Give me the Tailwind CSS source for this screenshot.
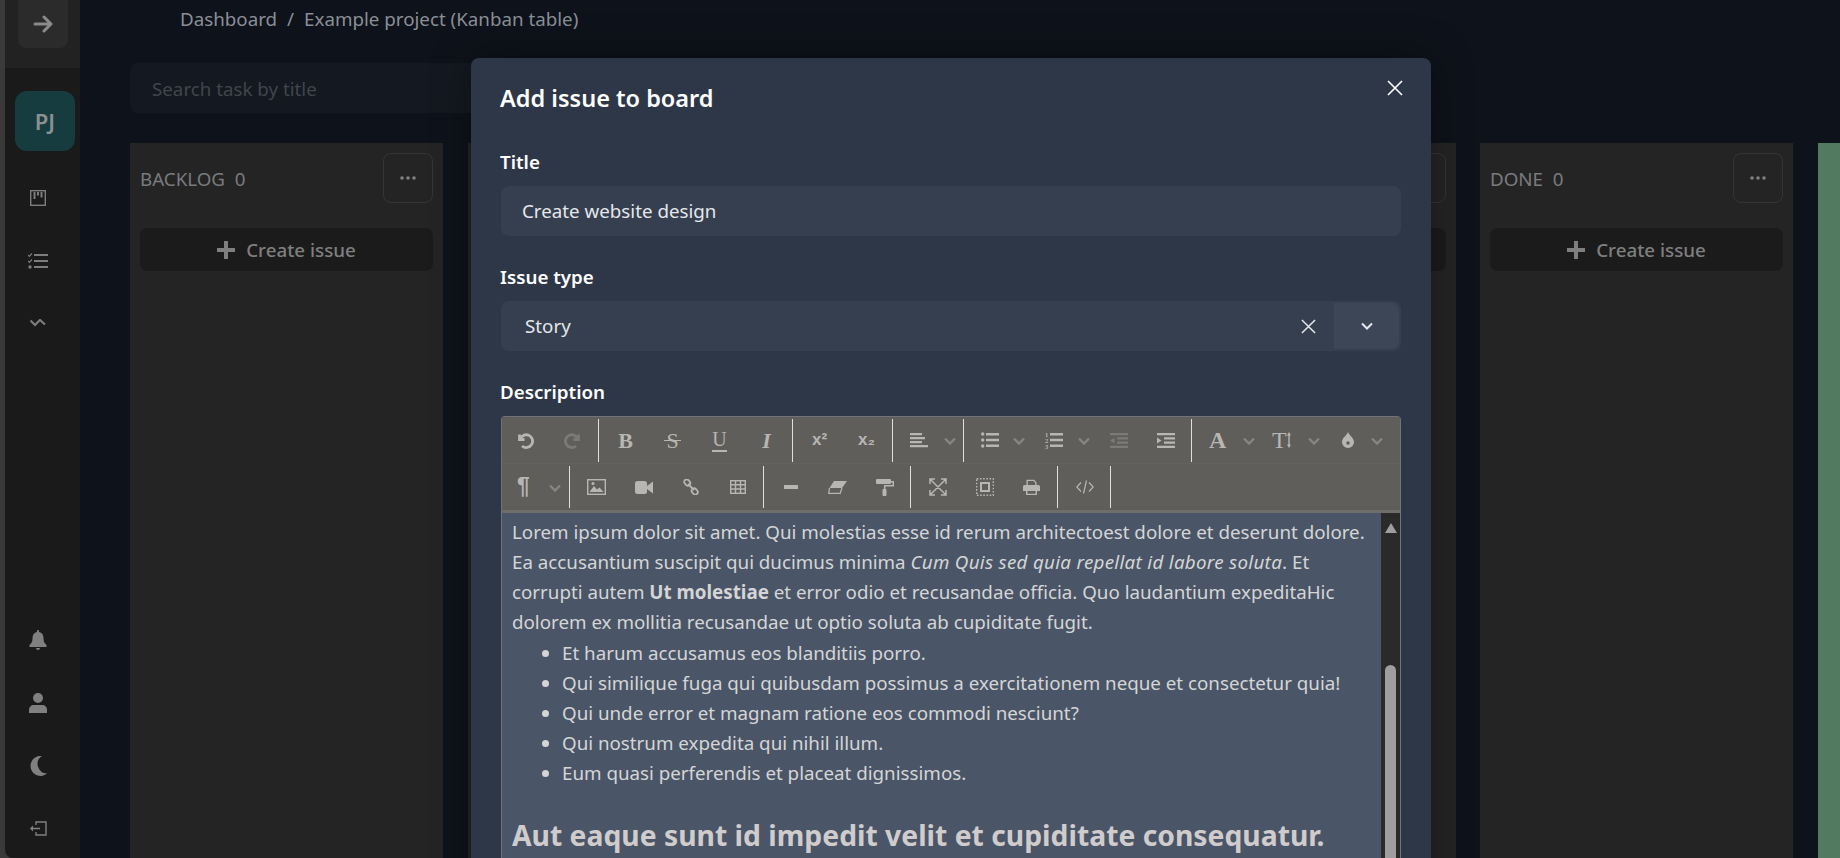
<!DOCTYPE html>
<html>
<head>
    <title>Kanban table</title>
    <script src="https://cdn.jsdelivr.net/npm/@tailwindcss/browser@4"></script>
</head>
<body class="bg-[#0e121a] font-['Noto_Sans',sans-serif] overflow-hidden">
    <div class="relative flex w-[1840px] h-[858px] overflow-hidden">
        <!-- sidebar -->
        <aside class="w-[80px] h-full shrink-0 pl-[5px] bg-[#3a3a3a]">
            <div class="h-full flex flex-col rounded-bl-lg bg-[#1a1a1a]">
                <div class="h-[68px] shrink-0 bg-[#222222] pl-[13px]">
                    <div class="w-[50px] h-[48px] rounded-b-lg bg-[#2b2b2b] flex items-center justify-center text-[#8a8a8a]">
                        <svg class="w-[20px] h-[18px]" viewBox="0 0 20 18" fill="none" stroke="currentColor" stroke-width="3" stroke-linecap="round" stroke-linejoin="round"><path d="M2 9h15M11 2l7 7-7 7"/></svg>
                    </div>
                </div>
                <div class="w-[60px] h-[60px] mt-[23px] ml-[10px] rounded-xl bg-[#163c40] flex items-center justify-center text-[#8b9090] text-[22px] font-semibold">PJ</div>
                <div class="flex flex-col items-center w-[66px] mt-[39px] gap-[47px] text-[#7d7d7d]">
                    <svg class="w-[16px] h-[16px]" viewBox="0 0 16 16" fill="none" stroke="currentColor" stroke-width="1.400"><rect x="0.700" y="0.700" width="14.600" height="14.600"/><path d="M4.500 2v7M8 2v3.500M11.500 2v5.500" stroke-width="2"/></svg>
                    <svg class="w-[20px] h-[16px]" viewBox="0 0 20 16" fill="currentColor"><path d="M6 1h14v2H6zM6 7h14v2H6zM6 13h14v2H6z"/><path d="M0 2l1.300 1.300L4 .5M0 8l1.300 1.300L4 6.500" fill="none" stroke="currentColor" stroke-width="1.200"/><circle cx="2" cy="14" r="1.700"/></svg>
                    <svg class="w-[16px] h-[8px] mt-[3px]" viewBox="0 0 16 8" fill="none" stroke="currentColor" stroke-width="2.200"><path d="M0.500 1.500L5 6l5-5 5 4.500"/></svg>
                </div>
                <div class="flex flex-col items-center w-[66px] mt-auto mb-[22px] gap-[43px] text-[#808080]">
                    <svg class="w-[18px] h-[20px]" viewBox="0 0 18 20" fill="currentColor"><path d="M9 0c.6 0 1 .4 1 1v1c3 .6 4.500 3 4.500 6 0 4 1 5 3 7v2H.5v-2c2-2 3-3 3-7 0-3 1.500-5.400 4.500-6V1c0-.6.4-1 1-1zM7 18h4c0 1-1 2-2 2s-2-1-2-2z"/></svg>
                    <svg class="w-[18px] h-[20px]" viewBox="0 0 18 20" fill="currentColor"><circle cx="9" cy="5" r="5"/><path d="M0 20v-3c0-3 2-5 5-5h8c3 0 5 2 5 5v3z"/></svg>
                    <svg class="w-[18px] h-[20px]" viewBox="0 0 18 20" fill="currentColor"><path d="M13 0A10 10 0 1 0 18 17.500A9.500 9.500 0 0 1 13 0z"/></svg>
                    <svg class="w-[17px] h-[15px] mt-[2px]" viewBox="0 0 17 15" fill="none" stroke="currentColor" stroke-width="1.400"><path d="M6 4V1h10v13H6v-3M1 7.500h9"/><path d="M0 7.500l3-3v6z" fill="currentColor" stroke="none"/></svg>
                </div>
            </div>
        </aside>
        <!-- main -->
        <main class="flex-1 flex flex-col min-w-0">
            <nav class="flex items-center h-[38px] pl-[100px] gap-[10px] text-[#8a8f96] text-[18.750px]">
                <span>Dashboard</span><span>/</span><span>Example project (Kanban table)</span>
            </nav>
            <div class="mt-[25px] ml-[50px] w-[400px] h-[50px] rounded-lg bg-[#141820] flex items-center pl-[22px] pt-[2px] text-[18.750px] text-[#41454c]">Search task by title</div>
            <div class="flex gap-[24.500px] mt-[30px] ml-[50px] flex-1">
                <section class="w-[313px] shrink-0 bg-[#242424] px-[10px]">
                    <div class="flex items-center justify-between h-[50px] mt-[10px]">
                        <span class="pt-[2px] text-[18.750px] text-[#797b7e] whitespace-pre">BACKLOG  0</span>
                        <button class="w-[50px] h-[50px] rounded-lg border border-[#353535] text-[#808080] flex items-center justify-center"><svg class="w-[16px] h-[4px]" viewBox="0 0 16 4" fill="currentColor"><circle cx="2" cy="2" r="1.800"/><circle cx="8" cy="2" r="1.800"/><circle cx="14" cy="2" r="1.800"/></svg></button>
                    </div>
                    <button class="flex items-center justify-center gap-[11px] w-full h-[43px] mt-[25px] pt-[2px] rounded-lg bg-[#1b1b1b] text-[#7f7f7f] text-[18.750px] font-medium"><svg class="w-[18px] h-[18px] mb-[2px]" viewBox="0 0 18 18" fill="currentColor"><path d="M7 0h4v7h7v4h-7v7H7v-7H0V7h7z"/></svg>Create issue</button>
                </section>
                <section class="w-[313px] shrink-0 bg-[#242424]"></section>
                <section class="w-[313px] shrink-0 bg-[#242424]"></section>
                <section class="w-[313px] shrink-0 bg-[#242424] px-[10px]">
                    <div class="flex items-center justify-end h-[50px] mt-[10px]">
                        <button class="w-[50px] h-[50px] rounded-lg border border-[#353535]"></button>
                    </div>
                    <div class="w-full h-[43px] mt-[25px] rounded-lg bg-[#1b1b1b]"></div>
                </section>
                <section class="w-[313px] shrink-0 bg-[#242424] px-[10px]">
                    <div class="flex items-center justify-between h-[50px] mt-[10px]">
                        <span class="pt-[2px] text-[18.750px] text-[#797b7e] whitespace-pre">DONE  0</span>
                        <button class="w-[50px] h-[50px] rounded-lg border border-[#353535] text-[#808080] flex items-center justify-center"><svg class="w-[16px] h-[4px]" viewBox="0 0 16 4" fill="currentColor"><circle cx="2" cy="2" r="1.800"/><circle cx="8" cy="2" r="1.800"/><circle cx="14" cy="2" r="1.800"/></svg></button>
                    </div>
                    <button class="flex items-center justify-center gap-[11px] w-full h-[43px] mt-[25px] pt-[2px] rounded-lg bg-[#1b1b1b] text-[#7f7f7f] text-[18.750px] font-medium"><svg class="w-[18px] h-[18px] mb-[2px]" viewBox="0 0 18 18" fill="currentColor"><path d="M7 0h4v7h7v4h-7v7H7v-7H0V7h7z"/></svg>Create issue</button>
                </section>
                <section class="w-[40px] shrink-0 bg-[#527a60]"></section>
            </div>
        </main>
        <!-- modal -->
        <div class="absolute left-[471px] top-[58px] w-[960px] h-[860px] rounded-lg bg-[#2d3748] px-[30px] text-white shadow-[0_0_40px_rgba(0,0,0,0.35)]">
            <h2 class="-ml-[1px] text-[23.500px] font-semibold leading-[32px] mt-[24px]">Add issue to board</h2>
            <svg class="absolute right-[28px] top-[22px] w-[16px] h-[16px]" viewBox="0 0 16 16" stroke="currentColor" stroke-width="1.600"><path d="M1 1l14 14M15 1L1 15"/></svg>
            <label class="-ml-[1px] block mt-[34px] text-[18.750px] font-semibold leading-[28px]">Title</label>
            <div class="mt-[10px] h-[50px] rounded-lg bg-[#363f4f] flex items-center pt-[1px] px-[21px] text-[18.750px] text-[#e5e7eb]">Create website design</div>
            <label class="-ml-[1px] block mt-[27px] text-[18.750px] font-semibold leading-[28px]">Issue type</label>
            <div class="mt-[10px] h-[50px] rounded-lg bg-[#363f4f] flex items-center justify-between pl-[24px] pr-[2px] text-[18.750px] text-[#e5e7eb]">
                <span class="pt-[1px]">Story</span>
                <div class="flex items-center h-[46px]">
                    <svg class="w-[15px] h-[15px] mr-[18px]" viewBox="0 0 16 16" stroke="currentColor" stroke-width="1.600"><path d="M1 1l14 14M15 1L1 15"/></svg>
                    <div class="w-[65px] h-[46px] bg-[#3d4656] rounded-r-lg flex items-center justify-center"><svg class="w-[12px] h-[8px]" viewBox="0 0 12 8" fill="none" stroke="currentColor" stroke-width="2"><path d="M1 1.500l5 5 5-5"/></svg></div>
                </div>
            </div>
            <label class="-ml-[1px] block mt-[27px] text-[18.750px] font-semibold leading-[28px]">Description</label>
            <div class="mt-[10px] rounded-t-sm border-x border-t border-[#6f7278]">
                <!-- toolbar -->
                <div class="bg-[#5f5e5a] border-b-[3px] border-[#6e6d69] text-[#b7b6b3] font-['Liberation_Serif',serif]">
                    <div class="flex h-[47px] items-center border-b border-[#63625e]">
                        <div class="flex h-[43px] pr-[2px] mr-[3px] border-r border-[#dfdfdd]">
                            <div class="w-[47px] flex items-center justify-center"><svg class="w-[17px] h-[17px]" viewBox="0 0 17 17" fill="none" stroke="currentColor" stroke-width="2.800"><path d="M2.500 2.500v5h5"/><path d="M3 7.500A6.400 6.400 0 1 1 5 14"/></svg></div>
                            <div class="w-[47px] flex items-center justify-center text-[#7b7a77]"><svg class="w-[17px] h-[17px]" viewBox="0 0 17 17" fill="none" stroke="currentColor" stroke-width="2.800"><path d="M14.500 2.500v5h-5"/><path d="M14 7.500A6.400 6.400 0 1 0 12 14"/></svg></div>
                        </div>
                        <div class="flex h-[43px] pr-[2px] mr-[3px] border-r border-[#dfdfdd]">
                            <div class="w-[47px] flex items-center justify-center text-[22px] font-bold">B</div>
                            <div class="relative w-[47px] flex items-center justify-center text-[22px]">S<span class="absolute left-[15px] top-[21px] w-[17px] h-[1.500px] bg-[#b7b6b3]"></span></div>
                            <div class="relative w-[47px] flex items-center justify-center text-[20px] pb-[3px]">U<span class="absolute left-[16px] top-[31px] w-[15px] h-[2px] bg-[#b7b6b3]"></span></div>
                            <div class="w-[47px] flex items-center justify-center text-[22px] italic font-bold">I</div>
                        </div>
                        <div class="flex h-[43px] pr-[2px] mr-[3px] border-r border-[#dfdfdd] font-['Liberation_Sans',sans-serif] font-bold">
                            <div class="w-[47px] flex items-center justify-center text-[17px]">x²</div>
                            <div class="w-[47px] flex items-center justify-center text-[17px]">x₂</div>
                        </div>
                        <div class="flex h-[43px] pr-[2px] mr-[3px] border-r border-[#dfdfdd]">
                            <div class="relative w-[65px]">
                                <svg class="absolute left-[14px] top-[13px] w-[18px] h-[16px]" viewBox="0 0 18 16" fill="currentColor"><path d="M0 1h12v2.200H0zM0 5h15v2.200H0zM0 9h12v2.200H0zM0 13h18v2.200H0z"/></svg>
                                <svg class="absolute left-[48px] top-[18px] w-[12px] h-[8px] text-[#868582]" viewBox="0 0 12 8" fill="none" stroke="currentColor" stroke-width="2.400"><path d="M1 1.500l5 5 5-5"/></svg>
                            </div>
                        </div>
                        <div class="flex h-[43px] pr-[2px] mr-[3px] border-r border-[#dfdfdd]">
                            <div class="relative w-[64px]">
                                <svg class="absolute left-[14px] top-[13px] w-[18px] h-[16px]" viewBox="0 0 18 16" fill="currentColor"><circle cx="1.700" cy="2" r="1.700"/><circle cx="1.700" cy="8" r="1.700"/><circle cx="1.700" cy="14" r="1.700"/><path d="M5 1h13v2.400H5zM5 6.800h13v2.400H5zM5 12.600h13V15H5z"/></svg>
                                <svg class="absolute left-[46px] top-[18px] w-[12px] h-[8px] text-[#868582]" viewBox="0 0 12 8" fill="none" stroke="currentColor" stroke-width="2.400"><path d="M1 1.500l5 5 5-5"/></svg>
                            </div>
                            <div class="relative w-[64px]">
                                <svg class="absolute left-[14px] top-[12px] w-[18px] h-[18px]" viewBox="0 0 18 18" fill="currentColor"><path d="M5 2h13v2.400H5zM5 7.800h13v2.400H5zM5 13.600h13V16H5z"/><text x="0" y="6" font-size="6.500" font-weight="700">1</text><text x="0" y="12" font-size="6.500" font-weight="700">2</text><text x="0" y="18" font-size="6.500" font-weight="700">3</text></svg>
                                <svg class="absolute left-[47px] top-[18px] w-[12px] h-[8px] text-[#868582]" viewBox="0 0 12 8" fill="none" stroke="currentColor" stroke-width="2.400"><path d="M1 1.500l5 5 5-5"/></svg>
                            </div>
                            <div class="w-[47px] flex items-center justify-center text-[#7b7a77]"><svg class="w-[18px] h-[15px]" viewBox="0 0 18 15" fill="currentColor"><path d="M0 0h18v2.200H0zM7 4.300h11v2.200H7zM7 8.500h11v2.200H7zM0 12.800h18V15H0zM4.500 4.500v6L0 7.500z"/></svg></div>
                            <div class="w-[47px] flex items-center justify-center"><svg class="w-[18px] h-[15px]" viewBox="0 0 18 15" fill="currentColor"><path d="M0 0h18v2.200H0zM7 4.300h11v2.200H7zM7 8.500h11v2.200H7zM0 12.800h18V15H0zM0 4.500v6l4.500-3z"/></svg></div>
                        </div>
                        <div class="flex h-[43px]">
                            <div class="relative w-[65px]">
                                <span class="absolute left-[14px] top-[5px] text-[24px] leading-[32px] font-bold">A</span>
                                <svg class="absolute left-[48px] top-[18px] w-[12px] h-[8px] text-[#868582]" viewBox="0 0 12 8" fill="none" stroke="currentColor" stroke-width="2.400"><path d="M1 1.500l5 5 5-5"/></svg>
                            </div>
                            <div class="relative w-[65px]">
                                <span class="absolute left-[12px] top-[5px] text-[24px] leading-[32px]">T</span>
                                <svg class="absolute left-[27px] top-[13px] w-[4px] h-[16px]" viewBox="0 0 4 16" fill="currentColor"><path d="M2 0l2 3.500H2.700v9H4L2 16l-2-3.500h1.300v-9H0z"/></svg>
                                <svg class="absolute left-[48px] top-[18px] w-[12px] h-[8px] text-[#868582]" viewBox="0 0 12 8" fill="none" stroke="currentColor" stroke-width="2.400"><path d="M1 1.500l5 5 5-5"/></svg>
                            </div>
                            <div class="relative w-[65px]">
                                <svg class="absolute left-[17px] top-[13px] w-[12px] h-[16px]" viewBox="0 0 12 16" fill="currentColor"><path d="M6 0c1 3 6 6 6 10a6 6 0 0 1-12 0C0 6 5 3 6 0z"/><circle cx="6" cy="11" r="1.800" fill="#5f5e5a"/></svg>
                                <svg class="absolute left-[46px] top-[18px] w-[12px] h-[8px] text-[#868582]" viewBox="0 0 12 8" fill="none" stroke="currentColor" stroke-width="2.400"><path d="M1 1.500l5 5 5-5"/></svg>
                            </div>
                        </div>
                    </div>
                    <div class="flex h-[46px] items-center">
                        <div class="flex h-[42px] pr-[2px] mr-[3px] border-r border-[#dfdfdd]">
                            <div class="relative w-[65px]">
                                <span class="absolute left-[15px] top-[4px] text-[23px] leading-[32px] font-bold font-['Liberation_Sans',sans-serif]">¶</span>
                                <svg class="absolute left-[47px] top-[18px] w-[12px] h-[8px] text-[#868582]" viewBox="0 0 12 8" fill="none" stroke="currentColor" stroke-width="2.400"><path d="M1 1.500l5 5 5-5"/></svg>
                            </div>
                        </div>
                        <div class="flex h-[42px] pr-[2px] mr-[3px] border-r border-[#dfdfdd]">
                            <div class="w-[47px] flex items-center justify-center"><svg class="w-[19px] h-[16px]" viewBox="0 0 19 16"><rect x=".7" y=".7" width="17.600" height="14.600" fill="none" stroke="currentColor" stroke-width="1.400"/><path d="M2.500 13l4.500-6 3 3.500 2.500-2 4 4.500z" fill="currentColor"/><circle cx="6" cy="4.500" r="1.500" fill="currentColor"/></svg></div>
                            <div class="w-[47px] flex items-center justify-center"><svg class="w-[18px] h-[13px]" viewBox="0 0 18 13" fill="currentColor"><rect width="12" height="13" rx="2.500"/><path d="M12 5l6-4.500v12L12 8z"/></svg></div>
                            <div class="w-[47px] flex items-center justify-center"><svg class="w-[16px] h-[16px]" viewBox="0 0 16 16" fill="none" stroke="currentColor" stroke-width="1.800"><rect x="1" y="1" width="6.500" height="5" rx="2.500" transform="rotate(45 4.250 3.500)"/><rect x="8.500" y="10" width="6.500" height="5" rx="2.500" transform="rotate(45 11.750 12.500)"/><path d="M5 5l6 6"/></svg></div>
                            <div class="w-[47px] flex items-center justify-center"><svg class="w-[16px] h-[14px]" viewBox="0 0 16 14" fill="none" stroke="currentColor" stroke-width="1.400"><rect x=".7" y=".7" width="14.600" height="12.600"/><path d="M.7 4.800h14.600M.7 9h14.600M5.500.7v12.600M10.500.7v12.600"/></svg></div>
                        </div>
                        <div class="flex h-[42px] pr-[2px] mr-[3px] border-r border-[#dfdfdd]">
                            <div class="w-[47px] flex items-center justify-center"><svg class="w-[14px] h-[4px]" viewBox="0 0 14 4" fill="currentColor"><rect width="14" height="4"/></svg></div>
                            <div class="w-[47px] flex items-center justify-center"><svg class="w-[19px] h-[13px]" viewBox="0 0 19 13"><path d="M6 0h13l-5 7H1.500z" fill="currentColor"/><path d="M1.500 7L.7 12.300h11.500L14 7" fill="none" stroke="currentColor" stroke-width="1.200"/></svg></div>
                            <div class="w-[47px] flex items-center justify-center"><svg class="w-[18px] h-[17px]" viewBox="0 0 18 17" fill="currentColor"><rect width="15" height="5" rx="1"/><path d="M15 2h3v5.500H9.500V10H8V6h8.500V3.500H15z"/><rect x="6.500" y="10" width="4" height="7" rx="1"/></svg></div>
                        </div>
                        <div class="flex h-[42px] pr-[2px] mr-[3px] border-r border-[#dfdfdd]">
                            <div class="w-[47px] flex items-center justify-center"><svg class="w-[18px] h-[18px]" viewBox="0 0 18 18" fill="none" stroke="currentColor" stroke-width="1.500"><path d="M1 6V1h5M12 1h5v5M17 12v5h-5M6 17H1v-5M1 1l16 16M17 1L1 17"/></svg></div>
                            <div class="w-[47px] flex items-center justify-center"><svg class="w-[18px] h-[18px]" viewBox="0 0 18 18" fill="none" stroke="currentColor"><rect x=".7" y=".7" width="16.600" height="16.600" stroke-width="1.400" stroke-dasharray="1.600 1.600"/><rect x="5" y="5" width="8" height="8" stroke-width="2"/></svg></div>
                            <div class="w-[47px] flex items-center justify-center"><svg class="w-[17px] h-[16px]" viewBox="0 0 17 16" fill="currentColor"><path d="M3.500 6V.7h7.500l2.500 2.500V6h-1.300V3.800L10.500 2h-5.700v4z"/><path d="M1.500 6h14A1.500 1.500 0 0 1 17 7.500V12h-3v4H3v-4H0V7.500A1.500 1.500 0 0 1 1.500 6zm3 6v2.700h8V12z"/></svg></div>
                        </div>
                        <div class="flex h-[42px] pr-[2px] border-r border-[#dfdfdd]">
                            <div class="w-[47px] flex items-center justify-center"><svg class="w-[18px] h-[14px]" viewBox="0 0 18 14" fill="none" stroke="currentColor" stroke-width="1.200"><path d="M5 2.500L.8 7 5 11.500M13 2.500L17.200 7 13 11.500M10.500 .5l-3 13"/></svg></div>
                        </div>
                    </div>
                </div>
                <!-- editor body -->
                <div class="flex h-[400px] bg-[#4a5568]">
                    <div class="flex-1 min-w-0 pl-[10px] pr-[10px] pt-[4px] text-[18.750px] leading-[30px] text-[#d5d5d5]">
                        <p>Lorem ipsum dolor sit amet. Qui molestias esse id rerum architectoest dolore et deserunt dolore. Ea accusantium suscipit qui ducimus minima <em class="tracking-[0.3px]">Cum Quis sed quia repellat id labore soluta</em>. Et corrupti autem <strong>Ut molestiae</strong> et error odio et recusandae officia. Quo laudantium expeditaHic dolorem ex mollitia recusandae ut optio soluta ab cupiditate fugit.</p>
                        <ul class="list-disc pl-[50px] mt-[1px]">
                            <li>Et harum accusamus eos blanditiis porro.</li>
                            <li>Qui similique fuga qui quibusdam possimus a exercitationem neque et consectetur quia!</li>
                            <li>Qui unde error et magnam ratione eos commodi nesciunt?</li>
                            <li>Qui nostrum expedita qui nihil illum.</li>
                            <li>Eum quasi perferendis et placeat dignissimos.</li>
                        </ul>
                        <h1 class="mt-[25px] text-[28.300px] font-bold leading-[44px] text-[#d0cccc]">Aut eaque sunt id impedit velit et cupiditate consequatur.</h1>
                    </div>
                    <div class="w-[19px] shrink-0 bg-[#2a2a2a] flex flex-col items-center px-[4px]">
                        <svg class="w-[12px] h-[10px] mt-[10px]" viewBox="0 0 12 10" fill="#9e9e9e"><path d="M6 0l6 10H0z"/></svg>
                        <div class="w-[11px] flex-1 mt-[132px] rounded-t-md bg-[#9e9e9e]"></div>
                    </div>
                </div>
            </div>
        </div>
    </div>
</body>
</html>
